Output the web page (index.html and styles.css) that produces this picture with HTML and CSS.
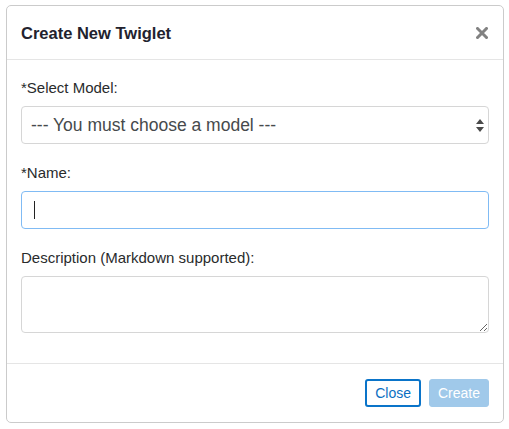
FILE: index.html
```html
<!DOCTYPE html>
<html lang="en">
<head>
<meta charset="utf-8">
<title>Create New Twiglet</title>
<link rel="stylesheet" href="styles.css">
</head>
<body>
<div class="modal">
  <div class="modal-header">
    <h4 class="modal-title">Create New Twiglet</h4>
    <button class="close" type="button" aria-label="Close">
      <svg width="12" height="12" viewBox="0 0 12 12"><path d="M1.5 1.5 L10.5 10.5 M10.5 1.5 L1.5 10.5" stroke="#828282" stroke-width="3" stroke-linecap="square"/></svg>
    </button>
  </div>
  <form class="modal-body">
    <div class="form-group">
      <label class="form-label">*Select Model:</label>
      <div class="select-wrap">
        <select class="form-control select">
          <option>--- You must choose a model ---</option>
        </select>
        <svg class="select-arrows" width="8" height="13" viewBox="0 0 8 13"><path d="M4 0 L8 5 L0 5 Z M0 8 L8 8 L4 13 Z" fill="#4a4a4a"/></svg>
      </div>
    </div>
    <div class="form-group">
      <label class="form-label">*Name:</label>
      <div class="input-wrap">
        <input class="form-control focused" type="text">
        <span class="caret"></span>
      </div>
    </div>
    <div class="form-group last">
      <label class="form-label">Description (Markdown supported):</label>
      <textarea class="form-control textarea" rows="2"></textarea>
    </div>
  </form>
  <div class="modal-footer">
    <button class="btn btn-outline" type="button">Close</button>
    <button class="btn btn-primary" type="button" disabled>Create</button>
  </div>
</div>
</body>
</html>
```
FILE: styles.css
```css
html, body {
  margin: 0;
  padding: 0;
  background: #ffffff;
}
body {
  font-family: "Liberation Sans", Arial, sans-serif;
  color: #292b2c;
}
.modal {
  margin: 5px 0 0 6px;
  width: 498px;
  box-sizing: border-box;
  border: 1px solid #cbcbcb;
  border-radius: 5px;
  background: #fff;
}
.modal-header {
  height: 54px;
  box-sizing: border-box;
  border-bottom: 1px solid #e5e5e5;
  display: flex;
  align-items: center;
  justify-content: space-between;
  padding: 0 15px 0 14px;
}
.modal-title {
  margin: 0;
  font-size: 16.5px;
  font-weight: bold;
  line-height: 24px;
  color: #22222e;
}
.close {
  border: 0;
  background: none;
  padding: 0;
  width: 12px;
  height: 12px;
  display: flex;
  cursor: pointer;
}
.modal-body {
  margin: 0;
  padding: 17px 14px 30px;
}
.form-group {
  margin-bottom: 18px;
}
.form-group.last {
  margin-bottom: 0;
}
.form-label {
  display: block;
  font-size: 15px;
  line-height: 21px;
  margin-bottom: 8px;
  color: #292b2c;
}
.form-control {
  display: block;
  width: 100%;
  height: 38px;
  box-sizing: border-box;
  border: 1px solid #d6d6d6;
  border-radius: 4px;
  padding: 0 12px;
  margin: 0;
  font-family: "Liberation Sans", Arial, sans-serif;
  font-size: 17.5px;
  color: #464a4c;
  background: #fff;
  outline: none;
}
.select-wrap, .input-wrap {
  position: relative;
}
.select {
  -webkit-appearance: none;
  appearance: none;
  padding-left: 9px;
}
.select-arrows {
  position: absolute;
  right: 5px;
  top: 13px;
}
.focused {
  border-color: #80bbf4;
}
.caret {
  position: absolute;
  left: 13px;
  top: 10px;
  width: 1px;
  height: 18px;
  background: #222;
}
.textarea {
  height: 57px;
  padding: 8px 12px;
  resize: vertical;
}
.modal-footer {
  border-top: 1px solid #e5e5e5;
  display: flex;
  justify-content: flex-end;
  gap: 8px;
  padding: 15px 14px;
}
.btn {
  height: 28px;
  box-sizing: border-box;
  font-family: "Liberation Sans", Arial, sans-serif;
  font-size: 14px;
  line-height: 1;
  border-radius: 3px;
  padding: 0 8px;
}
.btn-outline {
  border: 2px solid #0a74c9;
  color: #0a6fc2;
  background: #fff;
}
.btn-primary {
  border: 1px solid #a0c9ea;
  background: #a0c9ea;
  color: #fff;
}
```
